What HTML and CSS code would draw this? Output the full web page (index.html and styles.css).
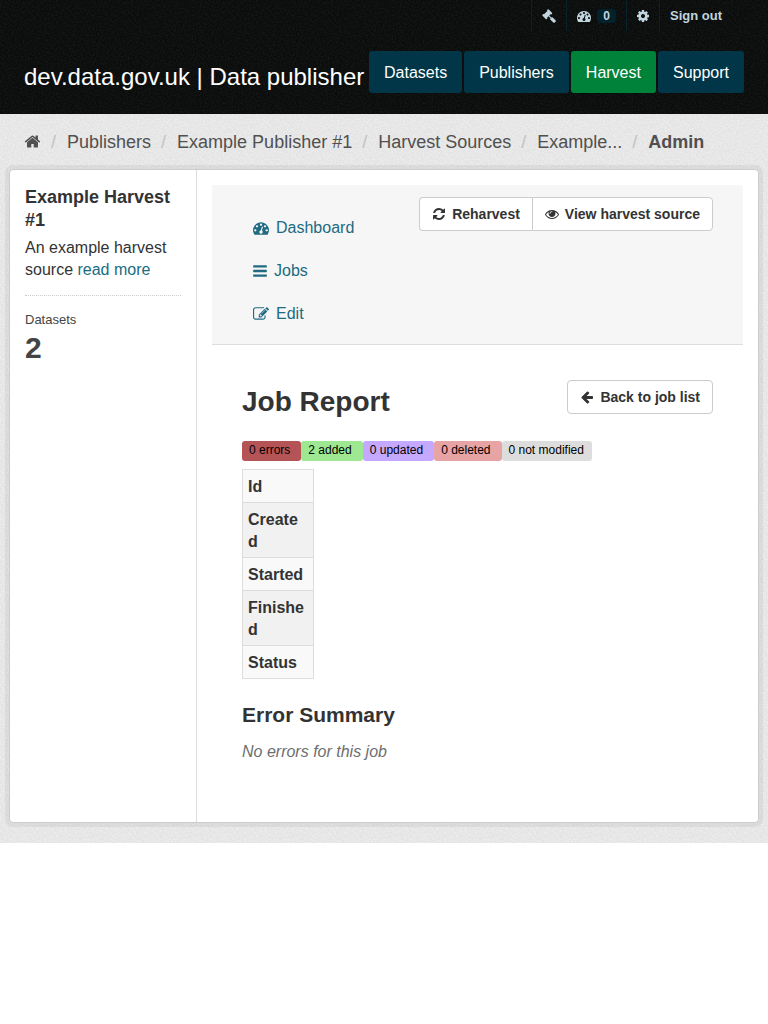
FILE: index.html
```html
<!DOCTYPE html>
<html lang="en">
<head>
<meta charset="utf-8">
<meta name="viewport" content="width=device-width, initial-scale=1">
<title>Job Report - dev.data.gov.uk</title>
<link rel="stylesheet" href="styles.css">
</head>
<body>
<svg class="sprite" aria-hidden="true">
  <symbol id="home" viewBox="0 0 1792 1792"><path d="M1472 992v480q0 26-19 45t-45 19h-384v-384h-256v384h-384q-26 0-45-19t-19-45v-480q0-1 .5-3t.5-3l575-474 575 474q1 2 1 6zm223-69l-62 74q-8 9-21 11h-3q-13 0-21-7l-692-577-692 577q-12 8-24 7-13-2-21-11l-62-74q-8-10-7-23.5t11-21.5l719-599q32-26 76-26t76 26l244 204v-195q0-14 9-23t23-9h192q14 0 23 9t9 23v408l219 182q10 8 11 21.5t-7 23.5z"/></symbol>
  <symbol id="bars" viewBox="128 0 1536 1792"><path d="M1664 1344v128q0 26-19 45t-45 19h-1408q-26 0-45-19t-19-45v-128q0-26 19-45t45-19h1408q26 0 45 19t19 45zm0-512v128q0 26-19 45t-45 19h-1408q-26 0-45-19t-19-45v-128q0-26 19-45t45-19h1408q26 0 45 19t19 45zm0-512v128q0 26-19 45t-45 19h-1408q-26 0-45-19t-19-45v-128q0-26 19-45t45-19h1408q26 0 45 19t19 45z"/></symbol>
  <symbol id="refresh" viewBox="0 0 1792 1792"><path d="M1639 1056q0 5-1 7-64 268-268 434.5t-478 166.5q-146 0-282.5-55t-243.5-157l-129 129q-19 19-45 19t-45-19-19-45v-448q0-26 19-45t45-19h448q26 0 45 19t19 45-19 45l-137 137q71 66 161 102t187 36q134 0 250-65t186-179q11-17 53-117 8-23 30-23h192q13 0 22.5 9.5t9.5 22.5zm25-800v448q0 26-19 45t-45 19h-448q-26 0-45-19t-19-45 19-45l138-138q-148-137-349-137-134 0-250 65t-186 179q-11 17-53 117-8 23-30 23h-199q-13 0-22.5-9.5t-9.5-22.5v-7q65-268 270-434.5t480-166.5q146 0 284 55.5t245 156.5l130-129q19-19 45-19t45 19 19 45z"/></symbol>
  <symbol id="eye" viewBox="0 0 1792 1792"><path d="M1664 960q-152-236-381-353 61 104 61 225 0 185-131.5 316.5t-316.5 131.5-316.5-131.5-131.5-316.5q0-121 61-225-229 117-381 353 133 205 333.5 326.5t434.5 121.5 434.5-121.5 333.5-326.5zm-720-384q0-20-14-34t-34-14q-125 0-214.5 89.5t-89.5 214.5q0 20 14 34t34 14 34-14 14-34q0-86 61-147t147-61q20 0 34-14t14-34zm848 384q0 34-20 69-140 230-376.5 368.5t-499.5 138.5-499.5-139-376.5-368q-20-35-20-69t20-69q140-229 376.5-368t499.5-139 499.5 139 376.5 368q20 35 20 69z"/></symbol>
  <symbol id="arrow-left" viewBox="0 0 1792 1792"><path d="M1664 896v128q0 53-32.5 90.5t-84.5 37.5h-704l293 294q38 36 38 90t-38 90l-75 76q-37 37-90 37-52 0-91-37l-651-652q-37-37-37-90 0-52 37-91l651-650q38-38 91-38 52 0 90 38l75 74q38 38 38 91t-38 91l-293 293h704q52 0 84.5 37.5t32.5 90.5z"/></symbol>
  <symbol id="cog" viewBox="128 0 1536 1792"><path d="M1152 896q0-106-75-181t-181-75-181 75-75 181 75 181 181 75 181-75 75-181zm512-109v222q0 12-8 23t-20 13l-185 28q-19 54-39 91 35 50 107 138 10 12 10 25t-9 23q-27 37-99 108t-94 71q-12 0-26-9l-138-108q-44 23-91 38-16 136-29 186-7 28-36 28h-222q-14 0-24.5-8.5t-11.5-21.5l-28-184q-49-16-90-37l-141 107q-10 9-25 9-14 0-25-11-126-114-165-168-7-10-7-23 0-12 8-23 15-21 51-66.5t54-70.5q-27-50-41-99l-183-27q-13-2-21-12.5t-8-23.5v-222q0-12 8-23t19-13l186-28q14-46 39-92-40-57-107-138-10-12-10-24 0-10 9-23 26-36 98.5-107.5t94.5-71.5q13 0 26 10l138 107q44-23 91-38 16-136 29-186 7-28 36-28h222q14 0 24.5 8.5t11.5 21.5l28 184q49 16 90 37l142-107q9-9 24-9 13 0 25 10 129 119 165 170 7 8 7 22 0 12-8 23-15 21-51 66.5t-54 70.5q26 50 41 98l183 28q13 2 21 12.5t8 23.5z"/></symbol>
  <symbol id="gauge" viewBox="0 0 1792 1792"><path d="M384 1152q0-53-37.5-90.5t-90.5-37.5-90.5 37.5-37.5 90.5 37.5 90.5 90.5 37.5 90.5-37.5 37.5-90.5zm192-448q0-53-37.5-90.5t-90.5-37.5-90.5 37.5-37.5 90.5 37.5 90.5 90.5 37.5 90.5-37.5 37.5-90.5zm428 481l101-382q6-26-7.5-48.5t-38.5-29.5-48 6.5-30 39.5l-101 382q-60 5-107 43.5t-63 98.5q-20 77 20 146t117 89 146-20 89-117q16-60-6-117t-72-91zm660-33q0-53-37.5-90.5t-90.5-37.5-90.5 37.5-37.5 90.5 37.5 90.5 90.5 37.5 90.5-37.5 37.5-90.5zm-640-640q0-53-37.5-90.5t-90.5-37.5-90.5 37.5-37.5 90.5 37.5 90.5 90.5 37.5 90.5-37.5 37.5-90.5zm448 192q0-53-37.5-90.5t-90.5-37.5-90.5 37.5-37.5 90.5 37.5 90.5 90.5 37.5 90.5-37.5 37.5-90.5zm320 448q0 261-141 483-19 29-54 29h-1402q-35 0-54-29-141-221-141-483 0-182 71-348t191-286 286-191 348-71 348 71 286 191 191 286 71 348z"/></symbol>
  <symbol id="edit" viewBox="0 0 1792 1792"><path d="M888 1184l116-116-152-152-116 116v56h96v96h56zm440-720q-16-16-33 1l-350 350q-17 17-1 33t33-1l350-350q17-17 1-33zm80 594v190q0 119-84.5 203.5t-203.5 84.5h-832q-119 0-203.5-84.5t-84.5-203.5v-832q0-119 84.5-203.5t203.5-84.5h832q63 0 117 25 15 7 18 23 3 17-9 29l-49 49q-14 14-32 8-23-6-45-6h-832q-66 0-113 47t-47 113v832q0 66 47 113t113 47h832q66 0 113-47t47-113v-126q0-13 9-22l64-64q15-15 35-7t20 29zm-96-738l288 288-672 672h-288v-288zm444 132l-92 92-288-288 92-92q28-28 68-28t68 28l152 152q28 28 28 68t-28 68z"/></symbol>
  <symbol id="gavel" viewBox="0 0 1792 1792"><path d="M1771 1536q0 53-37 90l-107 108q-39 37-91 37-53 0-90-37l-363-364q-38-36-38-90 0-53 43-96l-256-256-126 126q-14 14-34 14t-34-14q2 2 12.5 12t12.5 13 10 11.5 10 13.5 6 13.5 5.5 16.5 1.5 18q0 38-28 68-3 3-16.5 18t-19 20.5-18.5 16.5-22 15.5-22 9-26 4.5q-40 0-68-28l-408-408q-28-28-28-68 0-13 4.5-26t9-22 15.5-22 16.5-18.5 20.5-19 18-16.5q30-28 68-28 10 0 18 1.5t16.5 5.5 13.5 6 13.5 10 11.5 10 13 12.5 12 12.5q-14-14-14-34t14-34l348-348q14-14 34-14t34 14q-2-2-12.5-12t-12.5-13-10-11.5-10-13.5-6-13.5-5.5-16.5-1.5-18q0-38 28-68 3-3 16.5-18t19-20.5 18.5-16.5 22-15.5 22-9 26-4.5q40 0 68 28l408 408q28 28 28 68 0 13-4.5 26t-9 22-15.5 22-16.5 18.5-20.5 19-18 16.5q-30 28-68 28-10 0-18-1.5t-16.5-5.5-13.5-6-13.5-10-11.5-10-13-12.5-12-12.5q14 14 14 34t-14 34l-126 126 256 256q43-43 96-43 52 0 91 37l363 363q37 39 37 91z"/></symbol>
</svg>

<header class="masthead">
  <nav class="account" aria-label="Account">
    <a href="#" aria-label="Sysadmin settings"><svg class="icon"><use href="#gavel"/></svg></a>
    <a href="#" aria-label="Dashboard, 0 new items"><svg class="icon"><use href="#gauge"/></svg><span class="count">0</span></a>
    <a href="#" aria-label="Edit settings"><svg class="icon narrow"><use href="#cog"/></svg></a>
    <a href="#">Sign out</a>
  </nav>
  <div class="brand-row">
    <a class="brand" href="#">dev.data.gov.uk | Data publisher</a>
    <nav class="site-nav" aria-label="Main">
      <a href="#">Datasets</a>
      <a href="#">Publishers</a>
      <a class="active" href="#">Harvest</a>
      <a href="#">Support</a>
    </nav>
  </div>
</header>

<main class="main">
  <ol class="breadcrumb">
    <li><a href="#" aria-label="Home"><svg class="icon"><use href="#home"/></svg></a></li>
    <li><a href="#">Publishers</a></li>
    <li><a href="#">Example Publisher #1</a></li>
    <li><a href="#">Harvest Sources</a></li>
    <li><a href="#">Example...</a></li>
    <li><a class="current" href="#">Admin</a></li>
  </ol>

  <div class="wrapper">
    <aside class="sidebar">
      <h1 class="source-name">Example Harvest #1</h1>
      <p class="source-about">An example harvest source <a href="#">read more</a></p>
      <dl class="stats">
        <dt>Datasets</dt>
        <dd>2</dd>
      </dl>
    </aside>

    <article class="primary">
      <header class="page-header">
        <ul class="tabs">
          <li><a href="#"><svg class="icon"><use href="#gauge"/></svg>Dashboard</a></li>
          <li><a href="#"><svg class="icon narrow"><use href="#bars"/></svg>Jobs</a></li>
          <li><a href="#"><svg class="icon"><use href="#edit"/></svg>Edit</a></li>
        </ul>
        <div class="actions">
          <a class="btn" href="#"><svg class="icon"><use href="#refresh"/></svg>Reharvest</a>
          <a class="btn" href="#"><svg class="icon"><use href="#eye"/></svg>View harvest source</a>
        </div>
      </header>
      <div class="content">
        <div class="title-row">
          <h2 class="title">Job Report</h2>
          <a class="btn" href="#"><svg class="icon"><use href="#arrow-left"/></svg>Back to job list</a>
        </div>
        <div class="labels">
          <span class="label errors">0 errors</span>
          <span class="label added">2 added</span>
          <span class="label updated">0 updated</span>
          <span class="label deleted">0 deleted</span>
          <span class="label unchanged">0 not modified</span>
        </div>
        <table class="job">
          <tbody>
            <tr><th scope="row">Id</th></tr>
            <tr><th scope="row">Created</th></tr>
            <tr><th scope="row">Started</th></tr>
            <tr><th scope="row">Finished</th></tr>
            <tr><th scope="row">Status</th></tr>
          </tbody>
        </table>
        <h3 class="subtitle">Error Summary</h3>
        <p class="empty">No errors for this job</p>
      </div>
    </article>
  </div>
</main>
</body>
</html>
```
FILE: styles.css
```css
* { box-sizing: border-box; }

body {
  margin: 0;
  background: #fff;
  color: #333;
  font: 16px/22px "Liberation Sans", Arial, sans-serif;
}

h1, h2, h3, p, ul, ol, dl, dd { margin: 0; padding: 0; }
ul, ol { list-style: none; }
a { color: #206b82; text-decoration: none; }

.sprite { display: none; }
.icon { width: 16px; height: 16px; fill: currentColor; flex: none; }
.icon.narrow { width: 14px; }

/* Masthead */
.masthead {
  padding: 0 24px 21px;
  background: #0b0d0d url("data:image/svg+xml,%3Csvg xmlns='http://www.w3.org/2000/svg' width='100' height='100'%3E%3Cfilter id='n'%3E%3CfeTurbulence type='fractalNoise' baseFrequency='.6' numOctaves='2' stitchTiles='stitch'/%3E%3CfeColorMatrix values='0 0 0 0 1 0 0 0 0 1 0 0 0 0 1 .12 0 0 0 -.05'/%3E%3C/filter%3E%3Crect width='100' height='100' filter='url(%23n)'/%3E%3C/svg%3E");
}

.account {
  display: flex;
  justify-content: flex-end;
  padding-right: 12px;
}
.account a {
  display: flex;
  align-items: center;
  gap: 6px;
  height: 31px;
  padding: 0 10px;
  border-left: 1px solid #06222b;
  color: #c0d5dd;
  font-size: 13px;
  font-weight: bold;
}
.account .icon { width: 14px; height: 14px; }
.account .narrow { width: 12px; }
.account .count {
  padding: 0 6px;
  border-radius: 4px;
  background: #04222c;
  font-size: 12px;
  line-height: 14px;
}

.brand-row {
  display: flex;
  align-items: center;
  justify-content: space-between;
  padding-top: 20px;
}
.brand {
  padding-top: 10px;
  color: #fff;
  font-size: 24px;
  line-height: 30px;
  white-space: nowrap;
}
.site-nav { display: flex; gap: 2px; }
.site-nav a {
  padding: 11px 15px 9px;
  border-radius: 3px;
  background: #003647;
  color: #fff;
}
.site-nav .active { background: #00823b; }

/* Page body */
.main {
  padding: 0 9px 20px;
  background: #e4e4e4 url("data:image/svg+xml,%3Csvg xmlns='http://www.w3.org/2000/svg' width='100' height='100'%3E%3Cfilter id='n'%3E%3CfeTurbulence type='fractalNoise' baseFrequency='.6' numOctaves='2' stitchTiles='stitch'/%3E%3CfeColorMatrix values='0 0 0 0 1 0 0 0 0 1 0 0 0 0 1 1 0 0 0 -.4'/%3E%3C/filter%3E%3Crect width='100' height='100' filter='url(%23n)'/%3E%3C/svg%3E");
}

.breadcrumb {
  display: flex;
  flex-wrap: wrap;
  padding: 17px 15px 16px;
  font-size: 18px;
}
.breadcrumb li + li::before {
  content: "/";
  padding: 0 11px 0 10px;
  color: #c2c2c2;
}
.breadcrumb a { color: #505050; }
.breadcrumb .icon { width: 17px; height: 17px; vertical-align: -2px; }
.breadcrumb .current { font-weight: bold; }

.wrapper {
  display: grid;
  grid-template-columns: 1fr 3fr;
  min-height: 654px;
  border: 1px solid #ccc;
  border-radius: 4px;
  background: #fff;
  box-shadow: 0 0 0 4px rgba(0, 0, 0, .05);
}

/* Sidebar */
.sidebar {
  padding: 16px 15px;
  border-right: 1px solid #ddd;
}
.source-name { font-size: 18px; line-height: 23px; }
.source-about { margin-top: 5px; }
.stats {
  margin-top: 14px;
  padding-top: 14px;
  border-top: 1px dotted #ccc;
  color: #444;
}
.stats dt { font-size: 13px; line-height: 20px; }
.stats dd { font-size: 30px; font-weight: bold; line-height: 36px; }

/* Main column */
.primary { padding: 15px; }
.page-header {
  display: flex;
  align-items: flex-start;
  justify-content: space-between;
  padding: 12px 30px 8px;
  border-bottom: 1px solid #ddd;
  border-radius: 0 3px 0 0;
  background: #f6f6f6;
}
.tabs { padding: 10px 11px 0; }
.tabs a {
  display: flex;
  align-items: center;
  gap: 7px;
  padding: 10px 0 11px;
}

.actions { display: flex; }
.btn {
  display: flex;
  align-items: center;
  gap: 6px;
  padding: 6px 12px;
  border: 1px solid #ccc;
  border-radius: 4px;
  background: #fff;
  color: #333;
  font-size: 14px;
  font-weight: bold;
  line-height: 20px;
  white-space: nowrap;
}
.btn .icon { width: 14px; height: 14px; }
.actions .btn:first-child { border-right: 0; border-radius: 4px 0 0 4px; }
.actions .btn:last-child { border-radius: 0 4px 4px 0; }

.content { padding: 35px 30px; }
.title-row {
  display: flex;
  align-items: flex-start;
  justify-content: space-between;
}
.title { padding-top: 4px; font-size: 28px; line-height: 36px; }

.labels { display: flex; flex-wrap: wrap; margin-top: 21px; }
.label {
  padding: 0 11px 2px 7px;
  border-radius: 3px;
  color: #000;
  font-size: 12px;
  line-height: 18px;
}
.errors { background: #b55457; }
.added { background: #9fe892; }
.updated { background: #c5a8ff; }
.deleted { background: #e8a3a5; }
.unchanged { padding-right: 8px; background: #ddd; }

.job {
  width: 72px;
  margin-top: 8px;
  table-layout: fixed;
  border-collapse: collapse;
}
.job th {
  padding: 6px 7px 4px 5px;
  border: 1px solid #ddd;
  background: #f9f9f9;
  text-align: left;
  overflow-wrap: break-word;
}
.job tr:nth-child(even) th { background: #f1f1f1; }

.subtitle { margin-top: 21px; font-size: 21px; line-height: 30px; }
.empty { margin-top: 11px; color: #6e6e6e; font-style: italic; }
```
